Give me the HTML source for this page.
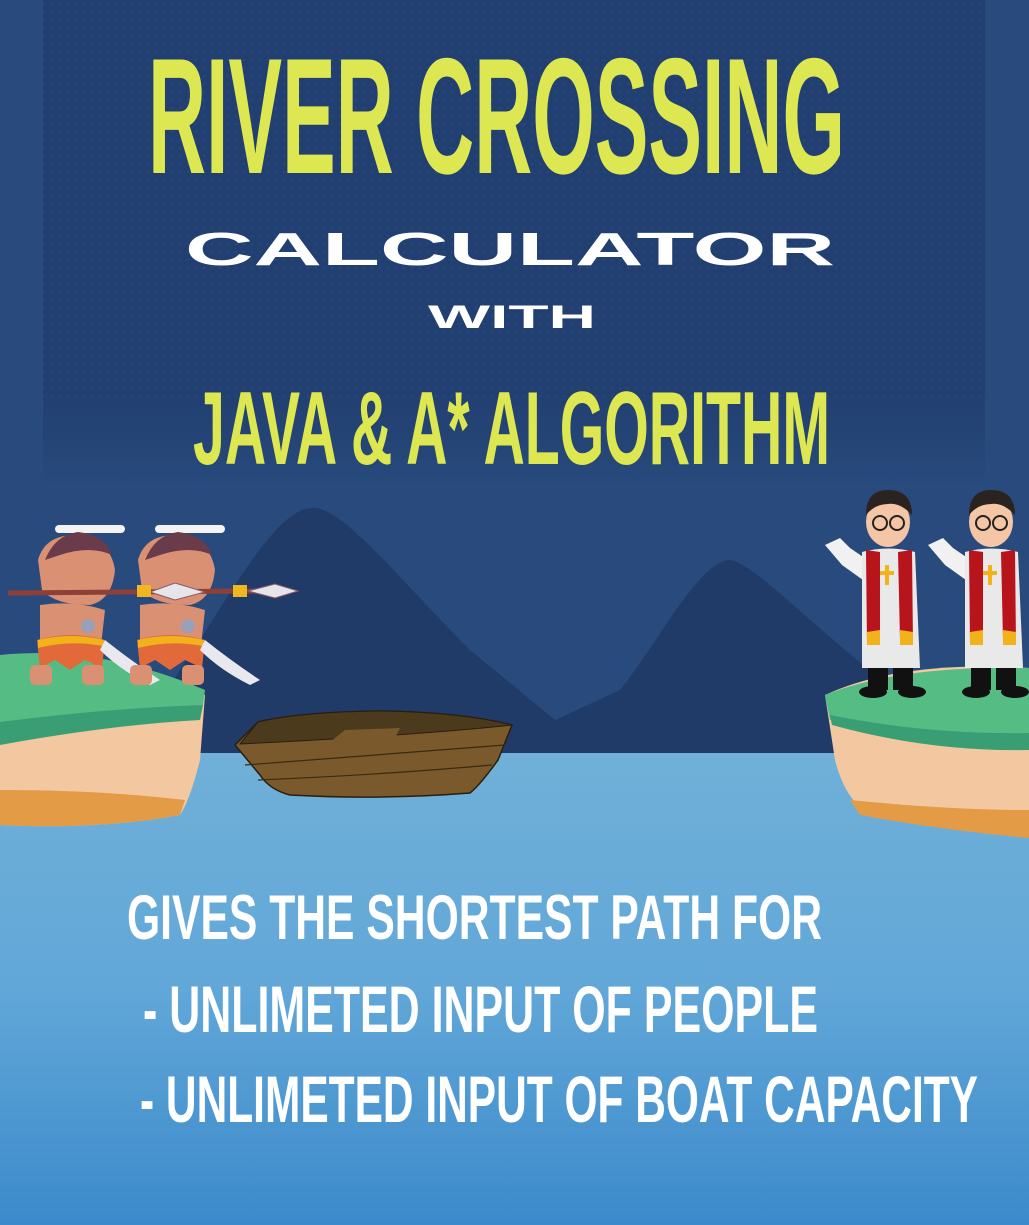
<!DOCTYPE html>
<html><head><meta charset="utf-8"><style>
html,body{margin:0;padding:0;width:1029px;height:1225px;overflow:hidden;background:#284a7c}
svg{display:block}
</style></head><body>
<svg width="1029" height="1225" viewBox="0 0 1029 1225" xmlns="http://www.w3.org/2000/svg">
<defs>
<linearGradient id="w" x1="0" y1="0" x2="0" y2="1"><stop offset="0" stop-color="#70b0d8"/><stop offset="0.5" stop-color="#61a7d8"/><stop offset="1" stop-color="#3c8acb"/></linearGradient>
<linearGradient id="p" x1="0" y1="0" x2="0" y2="1"><stop offset="0" stop-color="#223f71"/><stop offset="0.8" stop-color="#223f71"/><stop offset="1" stop-color="#284a7c"/></linearGradient>
<pattern id="dots" width="8" height="8" patternUnits="userSpaceOnUse"><circle cx="4" cy="4" r="1.2" fill="#2a4a80"/></pattern>
</defs>
<rect width="1029" height="1225" fill="#284a7c"/>
<rect x="43" y="0" width="942" height="490" fill="url(#p)"/>
<rect x="43" y="0" width="942" height="400" fill="url(#dots)" opacity="0.6"/>
<!-- mountains -->
<path d="M120,760 L200,640 C250,560 285,505 315,508 C345,510 400,580 470,650 L555,720 L620,690 C660,640 700,560 730,560 C760,565 820,640 985,760 Z" fill="#213b68"/>
<!-- water -->
<rect x="0" y="753" width="1029" height="472" fill="url(#w)"/>
<!-- left island -->
<path d="M0,660 Q100,645 205,695 L200,760 Q190,800 180,815 Q100,830 0,825 Z" fill="#f3c79f"/>
<path d="M0,790 Q100,790 185,800 L180,815 Q100,830 0,825 Z" fill="#e49b45"/>
<path d="M0,655 Q100,645 205,690 L203,705 Q120,712 0,735 Z" fill="#55bd83"/>
<path d="M0,722 Q110,708 203,705 L200,720 Q110,725 0,745 Z" fill="#3a9e74"/>
<!-- boat -->
<path d="M235,745 L258,722 Q300,712 380,711 Q460,712 512,725 L498,760 Q480,785 470,793 Q380,800 290,795 Q270,790 260,775 Z" fill="#7a5a2c" stroke="#2a1e0c" stroke-width="1.5"/>
<path d="M258,722 Q300,712 380,711 Q460,712 512,725 Q420,735 240,744 Z" fill="#4b3a1c" stroke="#2a1e0c" stroke-width="1"/>
<path d="M330,742 L345,730 L400,728 L395,738 Z" fill="#7a5a2c"/>
<path d="M245,765 Q380,755 505,745 M258,780 Q380,775 492,765" stroke="#3a2a10" stroke-width="1.2" fill="none"/>
<!-- savages -->
<g>
<g id="sv">
<rect x="55" y="525" width="70" height="8" rx="4" fill="#f3f3f3"/>
<path d="M38,560 Q45,535 75,535 Q110,538 115,570 Q112,600 90,605 Q55,605 42,590 Z" fill="#d99073"/>
<path d="M45,560 Q55,535 78,532 Q105,535 112,555 Q90,545 60,555 Z" fill="#6a3b4a"/>
<path d="M40,605 Q75,600 105,610 L100,655 Q70,660 40,650 Z" fill="#d99073"/>
<path d="M37,640 Q70,630 105,640 L102,668 L85,660 L70,670 L55,660 L40,668 Z" fill="#e26a3a"/>
<path d="M38,640 Q70,632 104,640 L103,646 Q70,640 38,648 Z" fill="#f2b21a"/>
<rect x="30" y="665" width="22" height="20" rx="5" fill="#d99073"/>
<rect x="82" y="665" width="22" height="20" rx="5" fill="#d99073"/>
<path d="M105,640 Q130,660 160,680 L150,685 Q120,670 100,650 Z" fill="#e8e8ee"/>
<circle cx="88" cy="626" r="7" fill="#9aa0b8"/>
</g>
<use href="#sv" x="100"/>
<line x1="8" y1="593" x2="260" y2="591" stroke="#8d3f38" stroke-width="5"/>
<path d="M150,592 L175,583 L205,592 L175,600 Z M248,591 L275,584 L298,591 L275,598 Z" fill="#e5e5ea" stroke="#8a5a6a"/>
<rect x="137" y="585" width="14" height="12" fill="#f0b820"/><rect x="233" y="585" width="14" height="12" fill="#f0b820"/>
</g>
<!-- right island -->
<path d="M825,695 Q900,660 1029,668 L1029,835 Q950,830 870,815 Q845,800 835,760 Z" fill="#f3c79f"/>
<path d="M850,800 Q950,810 1029,810 L1029,838 Q940,830 860,815 Z" fill="#e49b45"/>
<path d="M825,695 Q900,665 1029,668 L1029,745 Q930,748 830,720 Z" fill="#55bd83"/>
<path d="M830,715 Q930,735 1029,733 L1029,750 Q930,752 832,725 Z" fill="#3a9e74"/>
<!-- priests -->
<g id="pr">
<path d="M825,545 L840,538 L850,548 L875,565 L870,585 L842,565 Z" fill="#f1f1f1"/>
<path d="M862,552 Q888,545 915,552 L920,668 L862,668 Z" fill="#e9e9ea"/>
<path d="M866,550 L880,552 L880,640 L867,645 Z M898,552 L912,550 L913,645 L900,640 Z" fill="#b8141c"/>
<path d="M867,632 L880,630 L880,645 L867,645 Z M900,630 L913,632 L913,645 L900,645 Z" fill="#f2b21a"/>
<rect x="885" y="565" width="4" height="20" fill="#f2b21a"/><rect x="880" y="571" width="14" height="4" fill="#f2b21a"/>
<ellipse cx="888" cy="522" rx="22" ry="25" fill="#f4c6a6"/>
<path d="M866,515 Q866,490 888,490 Q912,490 912,515 Q900,502 888,504 Q875,504 866,515 Z" fill="#2a2320"/>
<circle cx="880" cy="523" r="7" fill="none" stroke="#222" stroke-width="2"/><circle cx="897" cy="523" r="7" fill="none" stroke="#222" stroke-width="2"/>
<rect x="868" y="668" width="20" height="22" fill="#111"/><rect x="893" y="668" width="20" height="22" fill="#111"/>
<ellipse cx="873" cy="692" rx="14" ry="6" fill="#111"/><ellipse cx="912" cy="692" rx="14" ry="6" fill="#111"/>
</g>
<use href="#pr" x="103"/>
<!-- text -->
<g font-family="'Liberation Sans Narrow','Liberation Sans',sans-serif" font-weight="bold">
<text x="148" y="173" font-size="165" fill="#dde752" textLength="697" lengthAdjust="spacingAndGlyphs">RIVER CROSSING</text>
<text x="193" y="464" font-size="104" fill="#dde752" textLength="637" lengthAdjust="spacingAndGlyphs">JAVA &amp; A* ALGORITHM</text>
<text x="127" y="939" font-size="63" fill="#fff" textLength="695" lengthAdjust="spacingAndGlyphs">GIVES THE SHORTEST PATH FOR</text>
<text x="143" y="1032" font-size="66" fill="#fff" textLength="675" lengthAdjust="spacingAndGlyphs">- UNLIMETED INPUT OF PEOPLE</text>
<text x="140" y="1122" font-size="66" fill="#fff" textLength="838" lengthAdjust="spacingAndGlyphs">- UNLIMETED INPUT OF BOAT CAPACITY</text>
</g>
<g font-family="'Liberation Sans',sans-serif" font-weight="bold" fill="#fff">
<text x="185" y="265" font-size="46" textLength="650" lengthAdjust="spacingAndGlyphs">CALCULATOR</text>
<text x="428" y="328" font-size="32" textLength="168" lengthAdjust="spacingAndGlyphs">WITH</text>
</g>
</svg>
</body></html>
